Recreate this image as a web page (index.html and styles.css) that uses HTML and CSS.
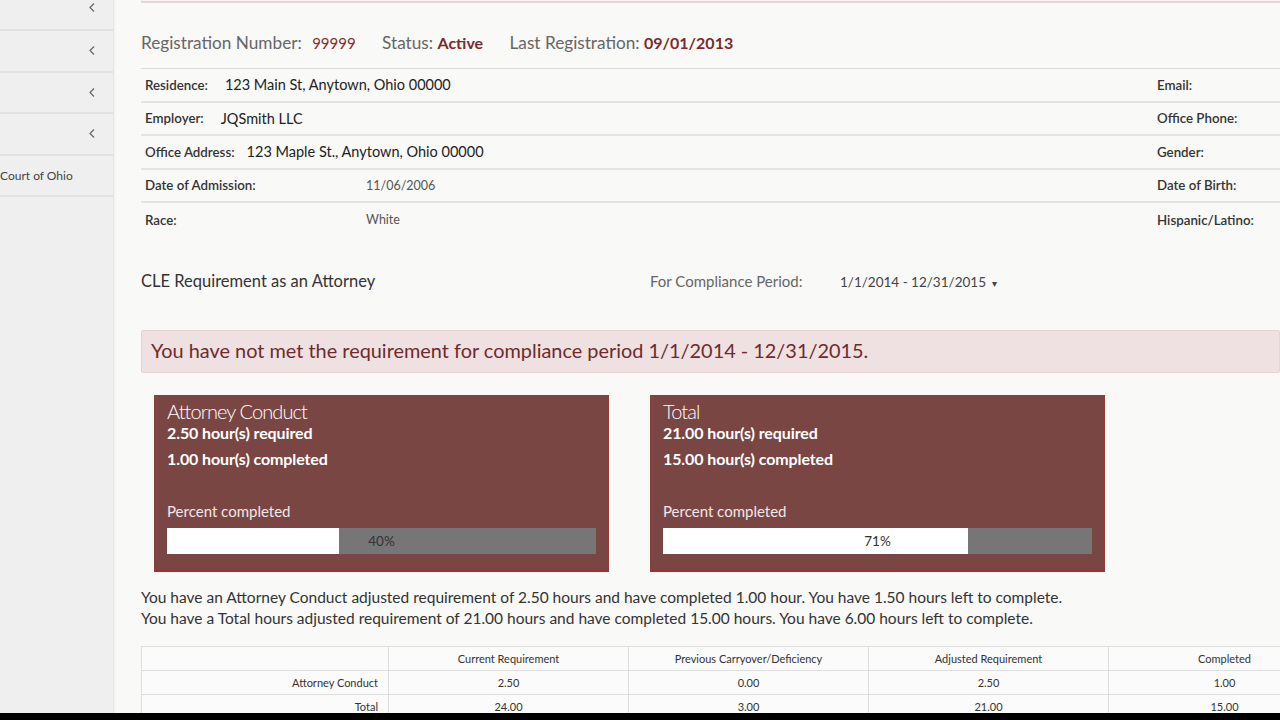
FILE: index.html
```html
<!DOCTYPE html>
<html>
<head>
<meta charset="utf-8">
<link rel="stylesheet" href="styles.css">
</head>
<body>
<div class="page">
  <aside class="sidebar">
    <div class="nav-item"><svg class="chev" width="6" height="9" viewBox="0 0 6 9"><polyline points="5,0.5 1,4.5 5,8.5" fill="none" stroke="#666" stroke-width="1.2"/></svg></div>
    <div class="nav-item"><svg class="chev" width="6" height="9" viewBox="0 0 6 9"><polyline points="5,0.5 1,4.5 5,8.5" fill="none" stroke="#666" stroke-width="1.2"/></svg></div>
    <div class="nav-item"><svg class="chev" width="6" height="9" viewBox="0 0 6 9"><polyline points="5,0.5 1,4.5 5,8.5" fill="none" stroke="#666" stroke-width="1.2"/></svg></div>
    <div class="nav-item"><svg class="chev" width="6" height="9" viewBox="0 0 6 9"><polyline points="5,0.5 1,4.5 5,8.5" fill="none" stroke="#666" stroke-width="1.2"/></svg></div>
    <div class="nav-item nav-text">Court of Ohio</div>
  </aside>
  <main class="main">
    <div class="top-card"></div>
    <div class="reg-line">
      <span class="lbl">Registration Number:</span> <span class="num">99999</span>
      <span class="lbl gap">Status:</span> <b class="val">Active</b>
      <span class="lbl gap">Last Registration:</span> <b class="val">09/01/2013</b>
    </div>
    <div class="info">
      <div class="info-row">
        <div class="left"><span class="k">Residence:</span><span class="v">123 Main St, Anytown, Ohio 00000</span></div>
        <div class="right k">Email:</div>
      </div>
      <div class="info-row">
        <div class="left"><span class="k">Employer:</span><span class="v">JQSmith LLC</span></div>
        <div class="right k">Office Phone:</div>
      </div>
      <div class="info-row">
        <div class="left"><span class="k">Office Address:</span><span class="v v-tight">123 Maple St., Anytown, Ohio 00000</span></div>
        <div class="right k">Gender:</div>
      </div>
      <div class="info-row">
        <div class="left"><span class="k wide">Date of Admission:</span><span class="v small">11/06/2006</span></div>
        <div class="right k">Date of Birth:</div>
      </div>
      <div class="info-row">
        <div class="left"><span class="k wide">Race:</span><span class="v small">White</span></div>
        <div class="right k">Hispanic/Latino:</div>
      </div>
    </div>
    <div class="cle-head">
      <div class="cle-title">CLE Requirement as an Attorney</div>
      <div class="period"><span class="plabel">For Compliance Period:</span><span class="pval">1/1/2014 - 12/31/2015 <span class="caret">&#9662;</span></span></div>
    </div>
    <div class="alert">You have not met the requirement for compliance period 1/1/2014 - 12/31/2015.</div>
    <div class="cards">
      <div class="card">
        <div class="card-title">Attorney Conduct</div>
        <div class="card-line">2.50 hour(s) required</div>
        <div class="card-line">1.00 hour(s) completed</div>
        <div class="pct-label">Percent completed</div>
        <div class="bar"><div class="fill" style="width:40%"></div><span class="bar-text">40%</span></div>
      </div>
      <div class="card">
        <div class="card-title">Total</div>
        <div class="card-line">21.00 hour(s) required</div>
        <div class="card-line">15.00 hour(s) completed</div>
        <div class="pct-label">Percent completed</div>
        <div class="bar"><div class="fill" style="width:71%"></div><span class="bar-text">71%</span></div>
      </div>
    </div>
    <p class="summary">You have an Attorney Conduct adjusted requirement of 2.50 hours and have completed 1.00 hour. You have 1.50 hours left to complete.<br>You have a Total hours adjusted requirement of 21.00 hours and have completed 15.00 hours. You have 6.00 hours left to complete.</p>
    <table class="req">
      <tr><th></th><th>Current Requirement</th><th>Previous Carryover/Deficiency</th><th>Adjusted Requirement</th><th>Completed</th></tr>
      <tr><td class="rl">Attorney Conduct</td><td>2.50</td><td>0.00</td><td>2.50</td><td>1.00</td></tr>
      <tr><td class="rl">Total</td><td>24.00</td><td>3.00</td><td>21.00</td><td>15.00</td></tr>
    </table>
  </main>
</div>
<div class="blackbar"></div>
</body>
</html>
```
FILE: styles.css
```css
* { box-sizing: border-box; }
html, body { margin: 0; padding: 0; }
body {
  width: 1280px; height: 720px; overflow: hidden;
  background: #f9f9f8;
  font-family: Lato, "Noto Sans", sans-serif;
  color: #333;
  position: relative;
}
.page { display: flex; height: 720px; }
.sidebar {
  width: 114px; flex: none;
  background: #efefef;
  border-right: 1px solid #e6e6e6;
  box-shadow: 1px 0 2px rgba(0,0,0,0.04);
}
.nav-item {
  height: 41.5px;
  border-bottom: 2px solid #e2e2e2;
  display: flex; align-items: center; justify-content: flex-end;
  padding-right: 18px;
}
.nav-item:first-child { height: 31px; align-items: flex-start; padding-top: 3px; }
.chev { display: block; }
.nav-text { justify-content: flex-start; padding-left: 0; font-size: 12px; color: #444; }
.main { flex: 1; padding-left: 27px; min-width: 0; }
.top-card {
  height: 3px;
  border-bottom: 2px solid #e8d6d6;
  background: #f4f4f4;
}
.reg-line {
  height: 66px; padding-top: 29px;
  font-size: 17.2px; color: #666;
  border-bottom: 1px solid #dcdcdc;
}
.reg-line .num { color: #8a2b2b; font-size: 15px; margin-left: 6px; }
.reg-line .gap { margin-left: 22px; }
.reg-line .val { color: #7c2b2b; font-weight: 700; font-size: 16px; }
.info-row {
  height: 33.5px;
  display: flex; align-items: center; justify-content: space-between;
  border-bottom: 2px solid #e4e4e4;
  padding-left: 4px;
}
.info-row:last-child { border-bottom: none; }
.left { display: flex; align-items: center; }
.k { font-size: 13.3px; color: #333; font-weight: 600; }
.k.wide { width: 221px; }
.v { font-size: 14.5px; color: #222; margin-left: 17px; }
.v.v-tight { margin-left: 12px; }
.v.small { font-size: 12.5px; color: #555; margin-left: 0; }
.right { width: 123px; }
.cle-head {
  display: flex; align-items: center;
  margin-top: 24px; height: 40px;
}
.cle-title { width: 509px; font-size: 16.5px; color: #333; }
.plabel { font-size: 15px; color: #666; display: inline-block; width: 190px; }
.pval { font-size: 13.5px; color: #444; }
.caret { font-size: 10px; margin-left: 3px; }
.alert {
  margin-top: 29px;
  height: 43px;
  background: #efe1e2;
  border: 1px solid #e7d2d4;
  border-radius: 2px;
  color: #6e2a2c;
  font-size: 19.9px;
  padding: 7px 0 0 9px;
}
.cards { display: flex; gap: 41px; margin-top: 22px; padding-left: 13px; }
.card {
  width: 455px; height: 177px;
  background: #7a4644;
  border: 1px solid #8c3e3c;
  border-bottom: 2px solid #9c3233;
  padding: 4px 12px 0 12px;
  color: #fff;
}
.card-title { font-size: 20px; font-weight: 300; letter-spacing: -0.9px; line-height: 22px; margin-bottom: -2px; }
.card-line { font-size: 16px; font-weight: 700; line-height: 26px; letter-spacing: -0.1px; }
.pct-label { font-size: 15px; font-weight: 400; margin-top: 29px; line-height: 20px; color: #f2e6e6; }
.bar {
  margin-top: 7px;
  height: 26px;
  background: #767676;
  position: relative;
}
.fill { height: 100%; background: #fff; }
.bar-text {
  position: absolute; left: 0; right: 0; top: 0;
  text-align: center; line-height: 26px; font-size: 13.5px; color: #333;
}
.summary {
  margin: 15px 0 0 0;
  font-size: 15.5px; line-height: 21.5px; color: #333;
}
.req {
  margin-top: 16px;
  border-collapse: collapse;
  width: 1200px;
  font-size: 11px;
  color: #333;
  background: #fbfbfb;
}
.req th, .req td {
  border: 1px solid #dedede;
  height: 24px;
  text-align: center;
  font-weight: 400;
  padding: 0 10px;
}
.req th:first-child, .req td.rl { width: 247px; text-align: right; }
.req th:nth-child(2), .req th:nth-child(3), .req th:nth-child(4) { width: 240px; }
.blackbar { position: absolute; left: 0; right: 0; bottom: 0; height: 7px; background: #000; }
```
